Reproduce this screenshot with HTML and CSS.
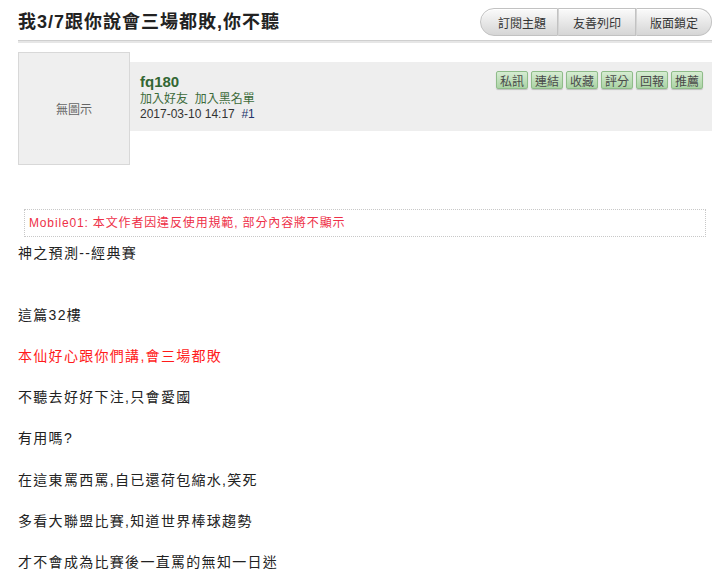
FILE: index.html
```html
<!DOCTYPE html>
<html lang="zh-Hant">
<head>
<meta charset="utf-8">
<title>我3/7跟你說會三場都敗,你不聽</title>
<link rel="stylesheet" href="styles.css">
</head>
<body>
<div class="page">
  <div class="topic-head">
    <h1 class="topic-title">我3/7跟你說會三場都敗,你不聽</h1>
    <div class="topic-tools">
      <a class="tool tool-first">訂閱主題</a>
      <a class="tool">友善列印</a>
      <a class="tool tool-last">版面鎖定</a>
    </div>
  </div>

  <div class="post-head">
    <div class="avatar">無圖示</div>
    <div class="author-bar">
      <div class="author">
        <div class="author-name">fq180</div>
        <div class="author-links"><a>加入好友</a>&nbsp; <a>加入黑名單</a></div>
        <div class="post-date">2017-03-10 14:17 &nbsp;<a class="floor">#1</a></div>
      </div>
      <div class="actions">
        <a class="act">私訊</a>
        <a class="act">連結</a>
        <a class="act">收藏</a>
        <a class="act">評分</a>
        <a class="act">回報</a>
        <a class="act">推薦</a>
      </div>
    </div>
  </div>

  <div class="notice">Mobile01: 本文作者因違反使用規範, 部分內容將不顯示</div>

  <div class="post-body">神之預測--經典賽<br><br><br>這篇32樓<br><br><span class="red">本仙好心跟你們講,會三場都敗</span><br><br>不聽去好好下注,只會愛國<br><br>有用嗎?<br><br>在這東罵西罵,自已還荷包縮水,笑死<br><br>多看大聯盟比賽,知道世界棒球趨勢<br><br>才不會成為比賽後一直罵的無知一日迷</div>
</div>
</body>
</html>
```

FILE: styles.css
```css
html, body {
  margin: 0;
  padding: 0;
  background: #fff;
}

body {
  font-family: "Liberation Sans", Arial, "Noto Sans CJK TC", sans-serif;
  color: #222;
}

.page {
  width: 694px;
  padding: 8px 0 0 18px;
}

.topic-head {
  display: flex;
  align-items: center;
  justify-content: space-between;
  height: 28px;
  padding-bottom: 4px;
  border-bottom: 1px solid #cfcfcf;
  box-shadow: 0 2px 0 #e6e6e6;
}

.topic-title {
  margin: 0;
  font-size: 18px;
  font-weight: bold;
  letter-spacing: 1px;
  color: #222;
  line-height: 28px;
}

.topic-tools {
  display: flex;
  height: 28px;
}

.tool {
  display: flex;
  align-items: center;
  justify-content: center;
  box-sizing: border-box;
  width: 78px;
  height: 28px;
  font-size: 12px;
  color: #333;
  background: linear-gradient(#fbfbfb, #e4e4e4 60%, #d6d6d6);
  border: 1px solid #c2c2c2;
  border-left: 1px solid #d4d4d4;
  box-shadow: inset 0 1px 0 #fff;
}

.tool-first {
  width: 78px;
  padding-left: 6px;
  border-left: 1px solid #c2c2c2;
  border-radius: 14px 0 0 14px;
}

.tool-last {
  width: 76px;
  border-radius: 0 14px 14px 0;
}

.post-head {
  display: flex;
  align-items: flex-start;
  margin-top: 11px;
}

.avatar {
  box-sizing: border-box;
  width: 112px;
  height: 113px;
  flex: none;
  display: flex;
  align-items: center;
  justify-content: center;
  background: #efefef;
  border: 1px solid #d8d8d8;
  font-size: 12px;
  color: #666;
}

.author-bar {
  flex: 1;
  display: flex;
  justify-content: space-between;
  align-items: flex-start;
  margin-top: 10px;
  height: 69px;
  box-sizing: border-box;
  padding: 9px 9px 0 10px;
  background: #eee;
}

.author-name {
  font-size: 15px;
  font-weight: bold;
  line-height: 21px;
  color: #336633;
}

.author-links {
  font-size: 12px;
  line-height: 15px;
  color: #3d6b3a;
}

.post-date {
  font-size: 12px;
  line-height: 15px;
  color: #333;
}

.floor {
  color: #22336b;
}

.actions {
  display: flex;
  gap: 3px;
  margin-top: 0;
}

.act {
  display: flex;
  align-items: center;
  justify-content: center;
  box-sizing: border-box;
  width: 32px;
  height: 18px;
  font-size: 12px;
  color: #4a4a4a;
  background: linear-gradient(#d6ecd2, #aad3a4);
  border: 1px solid #8fbc89;
  border-radius: 2px;
  box-shadow: 0 1px 1px rgba(0, 0, 0, 0.2);
}

.notice {
  margin: 44px 6px 0 6px;
  border: 1px dotted #c8c8c8;
  padding-left: 4px;
  line-height: 26px;
  font-size: 12px;
  letter-spacing: 0.85px;
  color: #ee3048;
}

.post-body {
  margin-top: 6px;
  font-size: 14px;
  line-height: 20.6px;
  letter-spacing: 1.3px;
  color: #222;
}

.red {
  color: #ff1a1a;
}
```
